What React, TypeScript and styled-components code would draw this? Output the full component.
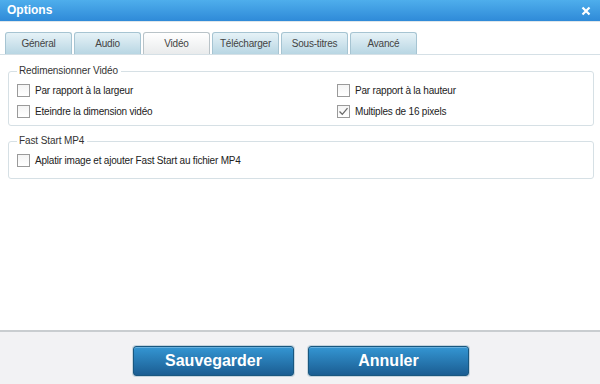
import React from 'react';
import styled, { createGlobalStyle } from 'styled-components';

const GlobalStyle = createGlobalStyle`
  html, body {
    margin: 0;
    padding: 0;
    background: #ffffff;
  }
  * {
    box-sizing: border-box;
  }
`;

const tabs = ['Général', 'Audio', 'Vidéo', 'Télécharger', 'Sous-titres', 'Avancé'];

const Check = ({ checked }: { checked?: boolean }) => (
  <CheckBox>
    {checked && (
      <svg width="11" height="11" viewBox="0 0 11 11">
        <path d="M1.5 5.5 L4.3 8.3 L9.5 2.2" fill="none" stroke="#6a6a6a" strokeWidth="1.3" />
      </svg>
    )}
  </CheckBox>
);

const App = () => {
  return (
    <Window>
      <GlobalStyle />
      <TitleBar>
        <Title>Options</Title>
        <CloseBtn>
          <svg width="10" height="10" viewBox="0 0 10 10">
            <path d="M1.5 1.5 L8.5 8.5 M8.5 1.5 L1.5 8.5" stroke="#ffffff" strokeWidth="2.2" />
          </svg>
        </CloseBtn>
      </TitleBar>

      <TabStrip>
        {tabs.map((t) => (
          <Tab key={t} $active={t === 'Vidéo'}>
            {t}
          </Tab>
        ))}
      </TabStrip>

      <Content>
        <Group>
          <Legend>Redimensionner Vidéo</Legend>
          <Grid>
            <Option>
              <Check />
              <span>Par rapport à la largeur</span>
            </Option>
            <Option>
              <Check />
              <span>Par rapport à la hauteur</span>
            </Option>
            <Option>
              <Check />
              <span>Eteindre la dimension vidéo</span>
            </Option>
            <Option>
              <Check checked />
              <span>Multiples de 16 pixels</span>
            </Option>
          </Grid>
        </Group>

        <Group $bottom={11}>
          <Legend>Fast Start MP4</Legend>
          <Option>
            <Check />
            <span>Aplatir image et ajouter Fast Start au fichier MP4</span>
          </Option>
        </Group>
      </Content>

      <Footer>
        <ActionBtn>Sauvegarder</ActionBtn>
        <ActionBtn>Annuler</ActionBtn>
      </Footer>
    </Window>
  );
};

const Window = styled.div`
  width: 600px;
  height: 384px;
  display: flex;
  flex-direction: column;
  background: #ffffff;
  font-family: 'Liberation Sans', Arial, sans-serif;
  overflow: hidden;
`;

const TitleBar = styled.div`
  height: 22px;
  display: flex;
  align-items: center;
  justify-content: space-between;
  padding: 0 9px 0 7px;
  background: linear-gradient(#4eaeec, #2f8ad8);
  border-bottom: 1px solid #dfe6ea;
`;

const Title = styled.div`
  color: #ffffff;
  font-weight: bold;
  font-size: 12px;
  padding-bottom: 1px;
`;

const CloseBtn = styled.div`
  display: flex;
  align-items: center;
  cursor: pointer;
`;

const TabStrip = styled.div`
  display: flex;
  gap: 2px;
  padding: 10px 0 0 5px;
  border-bottom: 1px solid #d5e0e6;
`;

const Tab = styled.div<{ $active?: boolean }>`
  width: 67px;
  height: 22px;
  display: flex;
  align-items: center;
  justify-content: center;
  font-size: 10px;
  letter-spacing: -0.2px;
  color: #444444;
  border: 1px solid ${(p) => (p.$active ? '#b9c3c8' : '#a6c4d2')};
  border-bottom: none;
  border-radius: 3px 3px 0 0;
  background: ${(p) =>
    p.$active ? 'linear-gradient(#ffffff, #e9ebec)' : 'linear-gradient(#e6f2f7, #b8d6e3)'};
  cursor: pointer;
`;

const Content = styled.div`
  flex: 1;
  display: flex;
  flex-direction: column;
  gap: 15px;
  padding: 16px 6px 0 8px;
`;

const Group = styled.div<{ $bottom?: number }>`
  position: relative;
  border: 1px solid #d6e0e5;
  border-radius: 3px;
  padding: 12px 8px ${(p) => p.$bottom ?? 7}px 8px;
`;

const Legend = styled.div`
  position: absolute;
  top: -7px;
  left: 8px;
  padding: 0 3px 0 2px;
  background: #ffffff;
  font-size: 10px;
  letter-spacing: -0.1px;
  color: #333333;
`;

const Grid = styled.div`
  display: grid;
  grid-template-columns: 320px 1fr;
  row-gap: 8px;
`;

const Option = styled.label`
  display: flex;
  align-items: center;
  gap: 5px;
  height: 13px;
  font-size: 10px;
  letter-spacing: -0.2px;
  color: #222222;
  white-space: nowrap;
`;

const CheckBox = styled.span`
  width: 13px;
  height: 13px;
  flex: none;
  display: flex;
  align-items: center;
  justify-content: center;
  border: 1px solid #9a9a9a;
  background: linear-gradient(#f4f4f4, #ffffff);
`;

const Footer = styled.div`
  height: 54px;
  display: flex;
  justify-content: center;
  align-items: flex-start;
  gap: 14px;
  padding: 14px 0 0 2px;
  background: #f2f2f4;
  border-top: 2px solid #c9cdd0;
`;

const ActionBtn = styled.div`
  width: 161px;
  height: 30px;
  display: flex;
  align-items: center;
  justify-content: center;
  color: #ffffff;
  font-weight: bold;
  font-size: 16px;
  border: 1px solid #19577f;
  border-radius: 3px;
  background: linear-gradient(#3496d3, #1b5d92);
  box-shadow: 0 0 0 1px #c6d4de, inset 0 1px 0 rgba(255, 255, 255, 0.25);
  cursor: pointer;
`;

export default App;
